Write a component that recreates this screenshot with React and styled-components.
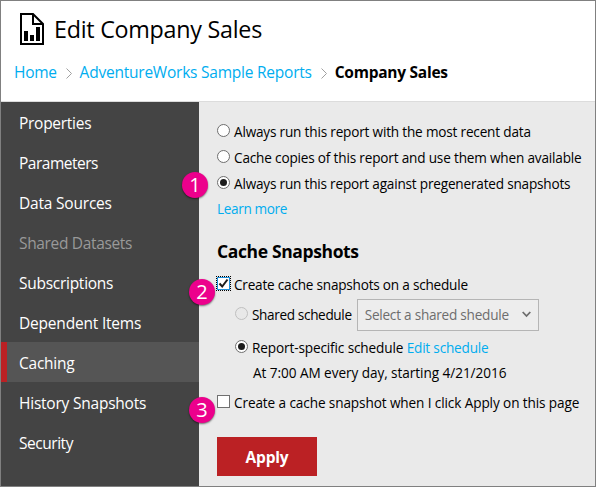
import React from 'react';
import styled, { createGlobalStyle, css } from 'styled-components';

const GlobalStyle = createGlobalStyle`
  * { box-sizing: border-box; }
  body { margin: 0; font-family: 'Open Sans', 'Noto Sans', sans-serif; color: #000; }
`;

const Window = styled.div`
  position: relative;
  width: 596px;
  height: 487px;
  border: 1px solid #808080;
  background: #fff;
  display: flex;
  flex-direction: column;
  overflow: hidden;
  white-space: nowrap;
`;

const Header = styled.header`
  height: 101px;
  flex: none;
  padding: 12px 13px 0;
  border-bottom: 1px solid #dcdcdc;
`;

const TitleRow = styled.div`
  display: flex;
  align-items: flex-start;
  gap: 10px;
  padding-left: 6px;
  height: 42px;
`;

const Title = styled.h1`
  margin: 0;
  font-size: 23.3px;
  font-weight: 400;
  line-height: 32px;
  letter-spacing: -0.26px;
`;

const Breadcrumb = styled.nav`
  display: flex;
  align-items: center;
  height: 34px;
  font-size: 15.5px;
  line-height: 34px;
`;

const Crumb = styled.a`
  color: #00adef;
  letter-spacing: ${(p) => p.$track}px;
`;

const CurrentCrumb = styled.span`
  font-weight: 700;
  letter-spacing: -0.26px;
`;

const Separator = styled.svg`
  flex: none;
  width: 6px;
  height: 11px;
  margin: 2px 8px 0 9px;
`;

const Body = styled.div`
  flex: 1;
  display: flex;
  min-height: 0;
`;

const Sidebar = styled.aside`
  width: 198px;
  flex: none;
  background: #444;
`;

const NavItem = styled.div`
  height: 40px;
  padding: 2px 0 0 12px;
  border-left: 6px solid transparent;
  color: #fff;
  font-size: 15.5px;
  line-height: 38px;
  letter-spacing: ${(p) => p.$track}px;
  ${(p) => p.$disabled && css`color: #999;`}
  ${(p) => p.$selected && css`background: #555; border-left-color: #bb2124;`}
`;

const Content = styled.main`
  flex: 1;
  background: #eaeaea;
  padding: 17px 0 0 18px;
  font-size: 13.6px;
`;

const Row = styled.div`
  display: flex;
  align-items: center;
  height: ${(p) => p.$height || 26}px;
  margin-top: ${(p) => p.$gap || 0}px;
  padding-left: ${(p) => p.$indent || 0}px;
`;

const Label = styled.span`
  line-height: 24px;
  letter-spacing: ${(p) => p.$track}px;
`;

const Link = styled.a`
  color: #00adef;
  line-height: 24px;
  letter-spacing: ${(p) => p.$track}px;
`;

const RadioDot = styled.span`
  flex: none;
  display: grid;
  place-items: center;
  width: 13px;
  height: 13px;
  margin: 0 4px 3px 0;
  border: 1px solid ${(p) => (p.$disabled ? '#c0c0c0' : '#6e6e6e')};
  border-radius: 50%;
  background: ${(p) => (p.$disabled ? '#e8e8e8' : '#fff')};
  &::after {
    content: '';
    width: 7px;
    height: 7px;
    border-radius: 50%;
    background: ${(p) => (p.$checked ? '#1c1c1c' : 'transparent')};
  }
`;

const CheckBox = styled.span`
  flex: none;
  display: grid;
  place-items: center;
  width: 13px;
  height: 13px;
  margin: 0 4px 3px 0;
  border: 1px solid #707070;
  background: #fff;
  ${(p) => p.$focused && css`
    border-color: #1e90dc;
    outline: 1px dotted #000;
  `}
`;

const Tick = styled.svg`
  width: 11px;
  height: 11px;
`;

const SectionTitle = styled.h2`
  margin: 18px 0 0;
  font-size: 17.5px;
  font-weight: 700;
  line-height: 24px;
  letter-spacing: -0.37px;
`;

const Select = styled.div`
  display: flex;
  align-items: center;
  justify-content: space-between;
  width: 182px;
  height: 32px;
  margin-left: 5px;
  padding: 0 7px;
  border: 1px solid #b5b5b5;
  background: #ededed;
  color: #6d6d6d;
`;

const Chevron = styled.svg`
  width: 9px;
  height: 7px;
  margin-bottom: 2px;
`;

const ApplyButton = styled.button`
  display: block;
  width: 100px;
  height: 39px;
  margin-top: 21px;
  padding: 1px 0 0;
  border: 0;
  background: #bb2124;
  color: #fff;
  font: 700 15.5px/38px 'Open Sans', 'Noto Sans', sans-serif;
  letter-spacing: -0.2px;
`;

const Callout = styled.span`
  position: absolute;
  left: ${(p) => p.$x}px;
  top: ${(p) => p.$y}px;
  width: 26px;
  height: 26px;
  border-radius: 50%;
  background: #ec008c;
  box-shadow: 0 1px 2px rgba(0, 0, 0, 0.55);
  color: #fff;
  font-size: 20px;
  line-height: 25px;
  text-align: center;
`;

const nav = [
  { text: 'Properties', track: -0.28 },
  { text: 'Parameters', track: -0.49 },
  { text: 'Data Sources', track: -0.2 },
  { text: 'Shared Datasets', track: -0.34, disabled: true },
  { text: 'Subscriptions', track: -0.27 },
  { text: 'Dependent Items', track: -0.2 },
  { text: 'Caching', track: -0.25, selected: true },
  { text: 'History Snapshots', track: -0.22 },
  { text: 'Security', track: -0.46 },
];

const modes = [
  { text: 'Always run this report with the most recent data', track: -0.19 },
  { text: 'Cache copies of this report and use them when available', track: -0.18 },
  { text: 'Always run this report against pregenerated snapshots', track: -0.2, checked: true },
];

const ReportIcon = () => (
  <svg width="24" height="32" viewBox="0 0 24 32">
    <path d="M1 1H13L23 11V31H1Z M13 1V11H23" fill="none" stroke="#000" strokeWidth="2" />
    <path d="M4 18h4v10H4z M10 22h4v6h-4z M16 14h4v14h-4z" />
  </svg>
);

const CrumbSeparator = () => (
  <Separator viewBox="0 0 6 11">
    <path d="M0.5 0.5L5.5 5.5L0.5 10.5" fill="none" stroke="#a0a0a0" />
  </Separator>
);

export default function App() {
  return (
    <>
      <GlobalStyle />
      <Window>
        <Header>
          <TitleRow>
            <ReportIcon />
            <Title>Edit Company Sales</Title>
          </TitleRow>
          <Breadcrumb>
            <Crumb $track={-0.3}>Home</Crumb>
            <CrumbSeparator />
            <Crumb $track={-0.229}>AdventureWorks Sample Reports</Crumb>
            <CrumbSeparator />
            <CurrentCrumb>Company Sales</CurrentCrumb>
          </Breadcrumb>
        </Header>
        <Body>
          <Sidebar>
            {nav.map((n) => (
              <NavItem key={n.text} $track={n.track} $disabled={n.disabled} $selected={n.selected}>
                {n.text}
              </NavItem>
            ))}
          </Sidebar>
          <Content>
            {modes.map((m) => (
              <Row key={m.text}>
                <RadioDot $checked={m.checked} />
                <Label $track={m.track}>{m.text}</Label>
              </Row>
            ))}
            <Row $height={24}>
              <Link $track={-0.36}>Learn more</Link>
            </Row>
            <SectionTitle>Cache Snapshots</SectionTitle>
            <Row $gap={9}>
              <CheckBox $focused>
                <Tick viewBox="0 0 11 11">
                  <path d="M1.5 5.5L4.2 8.5L9.5 1.5" fill="none" stroke="#1c1c1c" strokeWidth="2" />
                </Tick>
              </CheckBox>
              <Label $track={-0.22}>Create cache snapshots on a schedule</Label>
            </Row>
            <Row $gap={1} $height={32} $indent={18}>
              <RadioDot $disabled />
              <Label $track={-0.36}>Shared schedule</Label>
              <Select>
                <Label $track={-0.24}>Select a shared shedule</Label>
                <Chevron viewBox="0 0 9 7">
                  <path d="M0.7 1L4.5 5L8.3 1" fill="none" stroke="#6d6d6d" strokeWidth="1.8" />
                </Chevron>
              </Select>
            </Row>
            <Row $gap={4} $indent={18}>
              <RadioDot $checked />
              <Label $track={-0.13}>Report-specific schedule&nbsp;</Label>
              <Link $track={-0.2}>Edit schedule</Link>
            </Row>
            <Row $height={24} $indent={36}>
              <Label $track={-0.06}>At 7:00 AM every day, starting 4/21/2016</Label>
            </Row>
            <Row $gap={5}>
              <CheckBox />
              <Label $track={-0.11}>Create a cache snapshot when I click Apply on this page</Label>
            </Row>
            <ApplyButton>Apply</ApplyButton>
          </Content>
        </Body>
        <Callout $x={181} $y={171}>1</Callout>
        <Callout $x={188} $y={278}>2</Callout>
        <Callout $x={188} $y={396}>3</Callout>
      </Window>
    </>
  );
}
